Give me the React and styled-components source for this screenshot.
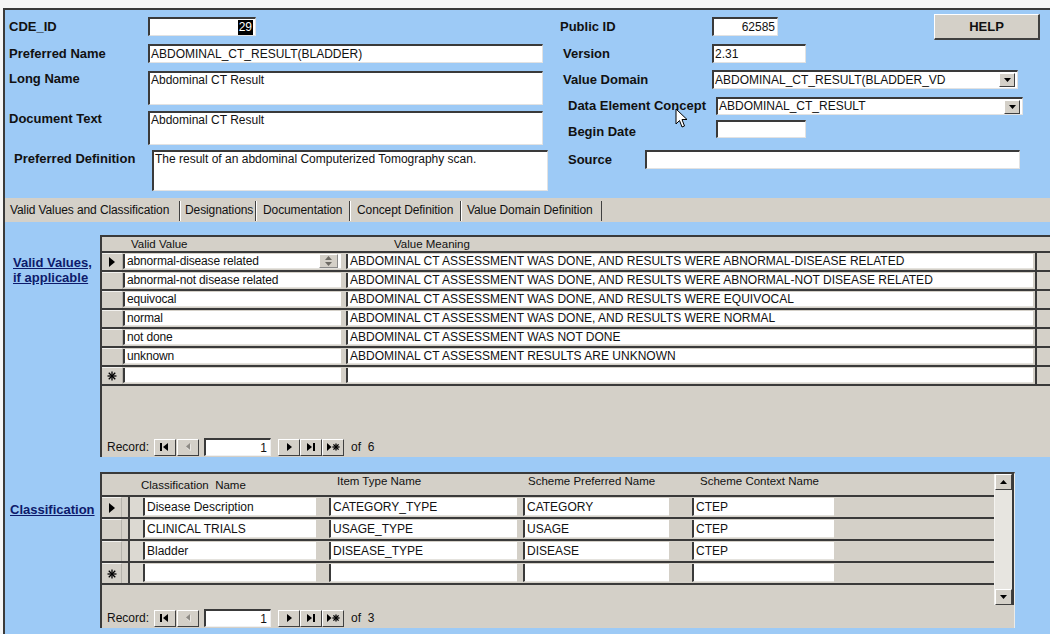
import React from 'react';
import styled, { createGlobalStyle } from 'styled-components';

const BLUE = '#9dcaf6';
const GRAY = '#d4d0c8';
const DARK = '#3a3a3a';

const GlobalStyle = createGlobalStyle`
  html, body { margin: 0; padding: 0; background: #f6f6f6; }
  body { font-family: "Liberation Sans", Arial, sans-serif; color: #111; }
`;

const Screen = styled.div`
  width: 1050px;
  height: 634px;
  overflow: hidden;
  box-sizing: border-box;
  padding: 8px 0 0 3px;
`;

const Frame = styled.div`
  position: relative;
  box-sizing: border-box;
  height: 626px;
  background: ${BLUE};
  border-top: 2px solid ${DARK};
  border-left: 2px solid ${DARK};
  display: flex;
  flex-direction: column;
`;

/* ---------- header form ---------- */

const Header = styled.div`
  height: 188px;
  display: flex;
`;

const Column = styled.div`
  width: ${p => p.$w}px;
  flex: ${p => (p.$w ? 'none' : 1)};
  padding-top: 7px;
  display: flex;
  flex-direction: column;
`;

const Row = styled.div`
  display: flex;
  align-items: ${p => (p.$top ? 'flex-start' : 'center')};
  height: ${p => p.$h}px;
  margin-top: ${p => p.$mt || 0}px;
`;

const Label = styled.div`
  box-sizing: border-box;
  width: ${p => p.$w}px;
  padding-left: ${p => p.$pl}px;
  padding-top: ${p => p.$pt || 0}px;
  font-size: 13px;
  font-weight: bold;
  line-height: 16px;
  white-space: nowrap;
  flex: none;
`;

const Field = styled.div`
  box-sizing: border-box;
  width: ${p => p.$w}px;
  height: ${p => p.$h}px;
  background: #fff;
  border-top: 2px solid ${DARK};
  border-left: 2px solid ${DARK};
  border-right: 1px solid #e2e2e2;
  border-bottom: 1px solid #e2e2e2;
  font-size: 12px;
  line-height: 15px;
  padding: 0 2px 0 1px;
  display: flex;
  align-items: ${p => (p.$multi ? 'flex-start' : 'center')};
  justify-content: ${p => (p.$right ? 'flex-end' : 'flex-start')};
  white-space: nowrap;
  overflow: hidden;
  flex: none;
`;

const Selected = styled.span`
  background: #000;
  color: #fff;
  padding: 0 1px;
`;

const ComboText = styled.span`
  flex: 1;
`;

const DropButton = styled.div`
  box-sizing: border-box;
  width: 16px;
  height: 14px;
  background: ${GRAY};
  border-top: 1px solid #fff;
  border-left: 1px solid #fff;
  border-right: 1px solid #404040;
  border-bottom: 1px solid #404040;
  display: flex;
  align-items: center;
  justify-content: center;
`;

const HelpButton = styled.div`
  box-sizing: border-box;
  width: 106px;
  height: 26px;
  margin-left: auto;
  margin-right: 10px;
  background: ${GRAY};
  border-top: 1px solid #fff;
  border-left: 1px solid #fff;
  border-right: 2px solid #404040;
  border-bottom: 2px solid #404040;
  font-size: 13px;
  font-weight: bold;
  display: flex;
  align-items: center;
  justify-content: center;
  flex: none;
`;

const Cursor = styled.svg`
  position: absolute;
  left: 670px;
  top: 98px;
`;

/* ---------- tabs ---------- */

const TabStrip = styled.div`
  height: 24px;
  background: ${GRAY};
  display: flex;
  align-items: flex-end;
`;

const Tab = styled.div`
  box-sizing: border-box;
  width: ${p => p.$w}px;
  height: 20px;
  padding-left: ${p => p.$pl}px;
  font-size: 12px;
  line-height: 18px;
  letter-spacing: -0.1px;
  white-space: nowrap;
  border-right: 1px solid #404040;
  border-left: ${p => (p.$active ? 'none' : '1px solid #fff')};
  margin-bottom: 1px;
`;

/* ---------- body ---------- */

const Body = styled.div`
  flex: 1;
  padding-top: 13px;
  display: flex;
  flex-direction: column;
`;

const Section = styled.div`
  display: flex;
  height: ${p => p.$h}px;
  margin-top: ${p => p.$mt || 0}px;
`;

const SideLabel = styled.div`
  box-sizing: border-box;
  width: 95px;
  flex: none;
  padding-left: ${p => p.$pl}px;
  padding-top: ${p => p.$pt}px;
  font-size: 13px;
  font-weight: bold;
  line-height: 15px;
  color: #0d1a6b;
  text-decoration: underline;
`;

const Grid = styled.div`
  box-sizing: border-box;
  width: ${p => (p.$w ? `${p.$w}px` : 'auto')};
  flex: ${p => (p.$w ? 'none' : 1)};
  background: ${GRAY};
  border-top: 2px solid ${DARK};
  border-left: 2px solid ${DARK};
  border-right: ${p => (p.$w ? '1px solid #ecebe8' : 'none')};
  display: flex;
  flex-direction: column;
`;

const HeadRow = styled.div`
  display: flex;
  height: ${p => p.$h}px;
  border-bottom: 2px solid ${DARK};
  font-size: 11.5px;
`;

const HeadLabel = styled.div`
  box-sizing: border-box;
  width: ${p => (p.$w ? `${p.$w}px` : 'auto')};
  flex: ${p => (p.$w ? 'none' : 1)};
  display: flex;
  align-items: ${p => (p.$top ? 'flex-start' : 'center')};
  padding-top: ${p => (p.$top ? 1 : 0)}px;
  white-space: nowrap;
`;

const DataRow = styled.div`
  display: flex;
  height: ${p => p.$h}px;
  border-bottom: 2px solid ${DARK};
`;

const RowSelector = styled.div`
  box-sizing: border-box;
  width: ${p => p.$w}px;
  flex: none;
  border-top: 1px solid #f2f1ee;
  border-right: 1px solid #b5b2ab;
  display: flex;
  align-items: center;
  justify-content: center;
`;

const Gap = styled.div`
  width: ${p => p.$w}px;
  flex: none;
`;

const Narrow = styled.div`
  box-sizing: border-box;
  width: ${p => p.$w}px;
  flex: none;
  border-left: 2px solid ${DARK};
  background: #dcd9d2;
`;

const Cell = styled.div`
  box-sizing: border-box;
  width: ${p => p.$w}px;
  flex: none;
  margin: 1px 0 1px;
  background: #fff;
  border-left: 2px solid ${DARK};
  border-bottom: 1px solid #e4e2dd;
  padding-left: 2px;
  font-size: 12px;
  display: flex;
  align-items: center;
  white-space: nowrap;
  overflow: hidden;
`;

const CellText = styled.span`
  flex: 1;
  letter-spacing: -0.15px;
`;

const Tail = styled.div`
  flex: 1;
  margin-left: 2px;
  border-left: 2px solid ${DARK};
`;

const Spinner = styled.div`
  box-sizing: border-box;
  width: 19px;
  height: 14px;
  margin-right: 3px;
  background: ${GRAY};
  border: 1px solid #fff;
  border-right-color: #8a8a8a;
  border-bottom-color: #8a8a8a;
  display: flex;
  flex-direction: column;
  align-items: center;
  justify-content: space-around;
`;

const Filler = styled.div`
  flex: 1;
`;

const Nav = styled.div`
  display: flex;
  align-items: center;
  height: 18px;
  padding-left: 5px;
  margin-bottom: 1px;
  font-size: 12px;
`;

const NavText = styled.span`
  margin-right: ${p => p.$mr || 0}px;
  margin-left: ${p => p.$ml || 0}px;
`;

const NavButton = styled.div`
  box-sizing: border-box;
  width: 22px;
  height: 17px;
  background: ${GRAY};
  border-top: 1px solid #fff;
  border-left: 1px solid #fff;
  border-right: 1px solid #404040;
  border-bottom: 1px solid #404040;
  display: flex;
  align-items: center;
  justify-content: center;
  margin-right: ${p => p.$mr || 0}px;
`;

const NavInput = styled.div`
  box-sizing: border-box;
  width: 67px;
  height: 18px;
  margin: 0 7px 0 5px;
  background: #fff;
  border-top: 2px solid ${DARK};
  border-left: 2px solid ${DARK};
  border-right: 1px solid #f0f0f0;
  border-bottom: 1px solid #f0f0f0;
  font-size: 12px;
  display: flex;
  align-items: center;
  justify-content: flex-end;
  padding-right: 3px;
`;

const TopArea = styled.div`
  display: flex;
  height: 131px;
`;

const Table = styled.div`
  flex: 1;
  display: flex;
  flex-direction: column;
`;

const ScrollBar = styled.div`
  box-sizing: border-box;
  width: 20px;
  flex: none;
  border-left: 1px solid #f4f3f0;
  border-right: 2px solid ${DARK};
  display: flex;
  flex-direction: column;
`;

const ScrollButton = styled.div`
  box-sizing: border-box;
  height: 16px;
  background: ${GRAY};
  border-top: 1px solid #fff;
  border-left: 1px solid #fff;
  border-right: 1px solid #404040;
  border-bottom: 1px solid #404040;
  display: flex;
  align-items: center;
  justify-content: center;
`;

const Track = styled.div`
  flex: 1;
  background: #e7e5e0;
`;

/* ---------- small drawings ---------- */

const Triangle = ({ dir = 'down', color = '#000' }) => {
  const d = {
    down: 'M0 0 L7 0 L3.5 4Z',
    up: 'M0 4 L7 4 L3.5 0Z',
  }[dir];
  return (
    <svg width="7" height="4" viewBox="0 0 7 4">
      <path d={d} fill={color} />
    </svg>
  );
};

const Star = ({ x, y, r = 3.5, c = '#000' }) => (
  <g stroke={c} strokeWidth="1.3">
    <line x1={x - r} y1={y} x2={x + r} y2={y} />
    <line x1={x} y1={y - r} x2={x} y2={y + r} />
    <line x1={x - r * 0.72} y1={y - r * 0.72} x2={x + r * 0.72} y2={y + r * 0.72} />
    <line x1={x - r * 0.72} y1={y + r * 0.72} x2={x + r * 0.72} y2={y - r * 0.72} />
  </g>
);

const Marker = ({ kind }) => (
  <svg width="12" height="12" viewBox="0 0 12 12">
    {kind === 'current' && <path d="M3 1 L9 6 L3 11Z" fill="#000" />}
    {kind === 'new' && <Star x={6} y={6} r={4.5} />}
  </svg>
);

const NavIcon = ({ kind }) => (
  <svg width="14" height="10" viewBox="0 0 14 10">
    {kind === 'first' && (
      <>
        <rect x="2" y="1" width="2" height="8" fill="#000" />
        <path d="M10 1 L5 5 L10 9Z" fill="#000" />
      </>
    )}
    {kind === 'prev' && (
      <>
        <path d="M9.5 2 L5.5 5.5 L9.5 9Z" fill="#fff" />
        <path d="M9 1 L5 4.5 L9 8Z" fill="#8d8a84" />
      </>
    )}
    {kind === 'next' && <path d="M5 1 L10 5 L5 9Z" fill="#000" />}
    {kind === 'last' && (
      <>
        <path d="M3 1 L8 5 L3 9Z" fill="#000" />
        <rect x="9" y="1" width="2" height="8" fill="#000" />
      </>
    )}
    {kind === 'new' && (
      <>
        <path d="M1 1 L5.5 5 L1 9Z" fill="#000" />
        <Star x={10} y={5} r={3.6} />
      </>
    )}
  </svg>
);

const RecordNav = ({ total }) => (
  <Nav>
    <NavText $mr={5}>Record:</NavText>
    <NavButton $mr={1}><NavIcon kind="first" /></NavButton>
    <NavButton><NavIcon kind="prev" /></NavButton>
    <NavInput>1</NavInput>
    <NavButton $mr={0}><NavIcon kind="next" /></NavButton>
    <NavButton><NavIcon kind="last" /></NavButton>
    <NavButton><NavIcon kind="new" /></NavButton>
    <NavText $ml={7}>of&nbsp; {total}</NavText>
  </Nav>
);

const Combo = ({ w, h, value }) => (
  <Field $w={w} $h={h}>
    <ComboText>{value}</ComboText>
    <DropButton><Triangle /></DropButton>
  </Field>
);

/* ---------- data ---------- */

const validValues = [
  ['abnormal-disease related', 'ABDOMINAL CT ASSESSMENT WAS DONE, AND RESULTS WERE ABNORMAL-DISEASE RELATED'],
  ['abnormal-not disease related', 'ABDOMINAL CT ASSESSMENT WAS DONE, AND RESULTS WERE ABNORMAL-NOT DISEASE RELATED'],
  ['equivocal', 'ABDOMINAL CT ASSESSMENT WAS DONE, AND RESULTS WERE EQUIVOCAL'],
  ['normal', 'ABDOMINAL CT ASSESSMENT WAS DONE, AND RESULTS WERE NORMAL'],
  ['not done', 'ABDOMINAL CT ASSESSMENT WAS NOT DONE'],
  ['unknown', 'ABDOMINAL CT ASSESSMENT RESULTS ARE UNKNOWN'],
  ['', ''],
];

const classifications = [
  ['Disease Description', 'CATEGORY_TYPE', 'CATEGORY', 'CTEP'],
  ['CLINICAL TRIALS', 'USAGE_TYPE', 'USAGE', 'CTEP'],
  ['Bladder', 'DISEASE_TYPE', 'DISEASE', 'CTEP'],
  ['', '', '', ''],
];

const markerFor = (i, n) => (i === 0 ? 'current' : i === n - 1 ? 'new' : null);

const tabs = [
  { name: 'Valid Values and Classification', w: 175, pl: 5, active: true },
  { name: 'Designations', w: 76, pl: 4 },
  { name: 'Documentation', w: 94, pl: 6 },
  { name: 'Concept Definition', w: 111, pl: 6 },
  { name: 'Value Domain  Definition', w: 141, pl: 5 },
];

export default function App() {
  return (
    <>
      <GlobalStyle />
      <Screen>
        <Frame>
          <Header>
            <Column $w={550}>
              <Row $h={19}>
                <Label $w={143} $pl={4}>CDE_ID</Label>
                <Field $w={108} $h={19} $right>
                  <Selected>29</Selected>
                </Field>
              </Row>
              <Row $h={19} $mt={8}>
                <Label $w={143} $pl={4}>Preferred Name</Label>
                <Field $w={395} $h={19}>ABDOMINAL_CT_RESULT(BLADDER)</Field>
              </Row>
              <Row $h={34} $mt={8} $top>
                <Label $w={143} $pl={4}>Long Name</Label>
                <Field $w={395} $h={34} $multi>Abdominal CT Result</Field>
              </Row>
              <Row $h={34} $mt={6} $top>
                <Label $w={143} $pl={4}>Document Text</Label>
                <Field $w={395} $h={34} $multi>Abdominal CT Result</Field>
              </Row>
              <Row $h={41} $mt={5} $top>
                <Label $w={147} $pl={9} $pt={1}>Preferred Definition</Label>
                <Field $w={396} $h={41} $multi>
                  The result of an abdominal Computerized Tomography scan.
                </Field>
              </Row>
            </Column>
            <Column>
              <Row $h={19}>
                <Label $w={157} $pl={5}>Public ID</Label>
                <Field $w={66} $h={19} $right>62585</Field>
                <HelpButton>HELP</HelpButton>
              </Row>
              <Row $h={19} $mt={8}>
                <Label $w={157} $pl={8}>Version</Label>
                <Field $w={94} $h={19}>2.31</Field>
              </Row>
              <Row $h={19} $mt={7}>
                <Label $w={157} $pl={8}>Value Domain</Label>
                <Combo w={306} h={19} value="ABDOMINAL_CT_RESULT(BLADDER_VD" />
              </Row>
              <Row $h={18} $mt={8}>
                <Label $w={161} $pl={13}>Data Element Concept</Label>
                <Combo w={307} h={18} value="ABDOMINAL_CT_RESULT" />
              </Row>
              <Row $h={18} $mt={5}>
                <Label $w={161} $pl={13} $pt={6}>Begin Date</Label>
                <Field $w={90} $h={18} />
              </Row>
              <Row $h={19} $mt={12}>
                <Label $w={90} $pl={13}>Source</Label>
                <Field $w={375} $h={19} />
              </Row>
            </Column>
          </Header>

          <TabStrip>
            {tabs.map(t => (
              <Tab key={t.name} $w={t.w} $pl={t.pl} $active={t.active}>
                {t.name}
              </Tab>
            ))}
          </TabStrip>

          <Body>
            <Section $h={222}>
              <SideLabel $pl={8} $pt={20}>
                Valid Values,
                <br />
                if applicable
              </SideLabel>
              <Grid>
                <HeadRow $h={14}>
                  <HeadLabel $w={29} />
                  <HeadLabel $w={263}>Valid Value</HeadLabel>
                  <HeadLabel>Value Meaning</HeadLabel>
                </HeadRow>
                {validValues.map(([value, meaning], i) => (
                  <DataRow key={i} $h={17}>
                    <RowSelector $w={21}>
                      {markerFor(i, validValues.length) && (
                        <Marker kind={markerFor(i, validValues.length)} />
                      )}
                    </RowSelector>
                    <Cell $w={218}>
                      <CellText>{value}</CellText>
                      {i === 0 && (
                        <Spinner>
                          <Triangle dir="up" color="#6d6a64" />
                          <Triangle dir="down" color="#6d6a64" />
                        </Spinner>
                      )}
                    </Cell>
                    <Gap $w={5} />
                    <Cell $w={687}>{meaning}</Cell>
                    <Tail />
                  </DataRow>
                ))}
                <Filler />
                <RecordNav total={6} />
              </Grid>
            </Section>

            <Section $h={156} $mt={15}>
              <SideLabel $pl={5} $pt={30}>Classification</SideLabel>
              <Grid $w={915}>
                <TopArea>
                  <Table>
                    <HeadRow $h={21}>
                      <HeadLabel $w={39} />
                      <HeadLabel $w={196}>Classification&nbsp; Name</HeadLabel>
                      <HeadLabel $w={191} $top>Item Type Name</HeadLabel>
                      <HeadLabel $w={172} $top>Scheme Preferred Name</HeadLabel>
                      <HeadLabel $top>Scheme Context Name</HeadLabel>
                    </HeadRow>
                    {classifications.map((r, i) => (
                      <DataRow key={i} $h={20}>
                        <RowSelector $w={20}>
                          {markerFor(i, classifications.length) && (
                            <Marker kind={markerFor(i, classifications.length)} />
                          )}
                        </RowSelector>
                        <Gap $w={6} />
                        <Narrow $w={15} />
                        <Cell $w={173}>{r[0]}</Cell>
                        <Gap $w={13} />
                        <Cell $w={188}>{r[1]}</Cell>
                        <Gap $w={6} />
                        <Cell $w={146}>{r[2]}</Cell>
                        <Gap $w={23} />
                        <Cell $w={142}>{r[3]}</Cell>
                      </DataRow>
                    ))}
                    <Filler />
                  </Table>
                  <ScrollBar>
                    <ScrollButton><Triangle dir="up" /></ScrollButton>
                    <Track />
                    <ScrollButton><Triangle dir="down" /></ScrollButton>
                  </ScrollBar>
                </TopArea>
                <Filler />
                <RecordNav total={3} />
              </Grid>
            </Section>
          </Body>

          <Cursor width="13" height="21" viewBox="0 0 13 21">
            <path
              d="M1 1 L1 16 L4.5 12.5 L7 19 L9.5 18 L7 11.5 L12 11.5 Z"
              fill="#fff"
              stroke="#000"
              strokeWidth="1"
              strokeLinejoin="round"
            />
          </Cursor>
        </Frame>
      </Screen>
    </>
  );
}
